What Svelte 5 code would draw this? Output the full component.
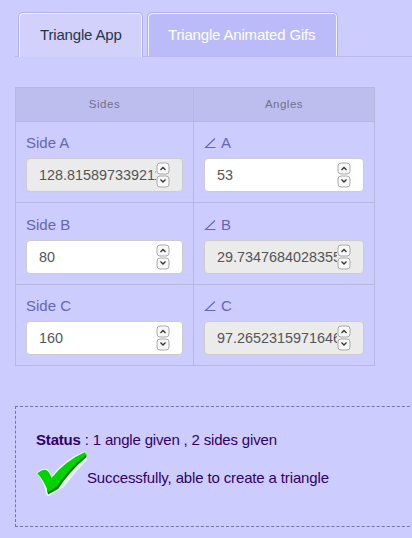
<script>
  const rows = [
    { name: 'A', side: '128.815897339211', sideLocked: true, angle: '53', angleLocked: false },
    { name: 'B', side: '80', sideLocked: false, angle: '29.7347684028355', angleLocked: true },
    { name: 'C', side: '160', sideLocked: false, angle: '97.2652315971646', angleLocked: true }
  ];
</script>

{#snippet field(value, locked)}
  <div class="field" class:locked>
    <span class="value">{value}</span>
    <svg class="spin" width="14" height="26" viewBox="0 0 14 26">
      <rect x="1" y="1" width="12" height="11" rx="3" />
      <rect x="1" y="14" width="12" height="11" rx="3" />
      <path d="M4.5 8 L7 5.5 L9.5 8 M4.5 17.5 L7 20 L9.5 17.5" />
    </svg>
  </div>
{/snippet}

<main>
  <nav>
    <div class="tab active">Triangle App</div>
    <div class="tab">Triangle Animated Gifs</div>
  </nav>

  <div class="table">
    <div class="head">Sides</div>
    <div class="head">Angles</div>
    {#each rows as row, i}
      <div class="cell" class:middle={i === 1}>
        <div class="label">Side {row.name}</div>
        {@render field(row.side, row.sideLocked)}
      </div>
      <div class="cell" class:middle={i === 1}>
        <div class="label"><svg class="angle" width="12" height="12" viewBox="0 0 12 12"><path d="M11 1.5 L1.5 10.5 H11.5" /></svg>{row.name}</div>
        {@render field(row.angle, row.angleLocked)}
      </div>
    {/each}
  </div>

  <section>
    <p><b>Status</b> : 1 angle given , 2 sides given</p>
    <div class="result">
      <svg width="51" height="46" viewBox="0 0 51 46">
        <path d="M0.5 22 Q6 17 11 18 Q14 20 15.5 25 Q29 8 48 0.5 L51 4 V9 Q39 21 28 36 Q20 41 12 45.5 L10 43 Q9 32 0.5 22Z" fill="#e8f8ec" />
        <path d="M12 43.5 L22 38 Q33 21 50.5 6 V3.5 L46 4 L18 32 L11 39Z" fill="#087c08" />
        <path d="M1.3 22.3 Q7 18 10 19 Q13.5 20.5 15.5 27 Q29 10 48.5 1.2 L50.5 3.8 Q33 17 21.5 35 Q17 38.5 12 41 Q9 31 1.3 22.3Z" fill="#00d400" />
      </svg>
      <span>Successfully, able to create a triangle</span>
    </div>
  </section>
</main>

<style>
  :global(body) { background: #ccccff; }
  main {
    box-sizing: border-box;
    width: 412px;
    height: 538px;
    padding: 12px 0 0 15px;
    overflow: hidden;
    font: 15px "Liberation Sans", Arial, sans-serif;
    background: #ccccff;
  }
  nav {
    display: flex;
    gap: 4px;
    height: 44px;
    padding-left: 3px;
    border-bottom: 1px solid #b9b9f6;
  }
  .tab {
    box-sizing: border-box;
    width: 191px;
    height: 44px;
    border: 1px solid #b0b0ec;
    border-bottom: 0;
    border-radius: 5px 5px 0 0;
    box-shadow: inset 1px 1px #f1f1ff, inset -1px 0 #f1f1ff;
    background: #bbbbfa;
    color: #fff;
    line-height: 43px;
    padding-left: 20px;
    letter-spacing: -0.17px;
    white-space: nowrap;
  }
  .tab.active {
    width: 125px;
    height: 45px;
    padding-left: 21px;
    background: #d1d1fb;
    color: #25364a;
  }
  .table {
    display: grid;
    grid-template-columns: 178px 181px;
    grid-template-rows: 34px 81px 82px 81px;
    width: 359px;
    margin-top: 30px;
    border-top: 1px solid #b8b8dd;
    border-left: 1px solid #b8b8dd;
  }
  .head, .cell {
    box-sizing: border-box;
    border-right: 1px solid #b8b8dd;
    border-bottom: 1px solid #b8b8dd;
  }
  .head {
    background: #bebeee;
    color: #70708f;
    font-size: 11.5px;
    letter-spacing: 0.5px;
    line-height: 33px;
    text-align: center;
  }
  .cell { padding: 12px 10px 0; }
  .cell.middle { padding-top: 13px; }
  .label {
    height: 18px;
    margin-bottom: 6px;
    line-height: 18px;
    color: #6666b5;
  }
  .angle {
    margin-right: 5px;
    vertical-align: -1px;
    fill: none;
    stroke: #6666b5;
    stroke-width: 1.1;
  }
  .field {
    position: relative;
    box-sizing: border-box;
    height: 34px;
    padding: 0 26px 0 12px;
    border: 1px solid #ccc;
    border-radius: 4px;
    background: #fff;
    color: #555;
    line-height: 32px;
  }
  .field.locked { background: #ebebeb; }
  .value {
    display: block;
    overflow: hidden;
    white-space: nowrap;
    font-size: 14.4px;
  }
  .spin {
    position: absolute;
    top: 3px;
    right: 12px;
  }
  .spin rect { fill: #f8f8f8; stroke: #aaa; }
  .spin path { fill: none; stroke: #333; stroke-width: 1.3; }
  section {
    box-sizing: border-box;
    width: 420px;
    height: 121px;
    margin-top: 40px;
    padding: 24px 20px 0;
    border: 1px dashed #7474aa;
    color: #330066;
    letter-spacing: -0.14px;
  }
  p { margin: 0; line-height: 18px; letter-spacing: -0.18px; }
  .result {
    display: flex;
    margin-top: 2px;
  }
  .result span { line-height: 18px; margin-top: 18px; }
</style>
